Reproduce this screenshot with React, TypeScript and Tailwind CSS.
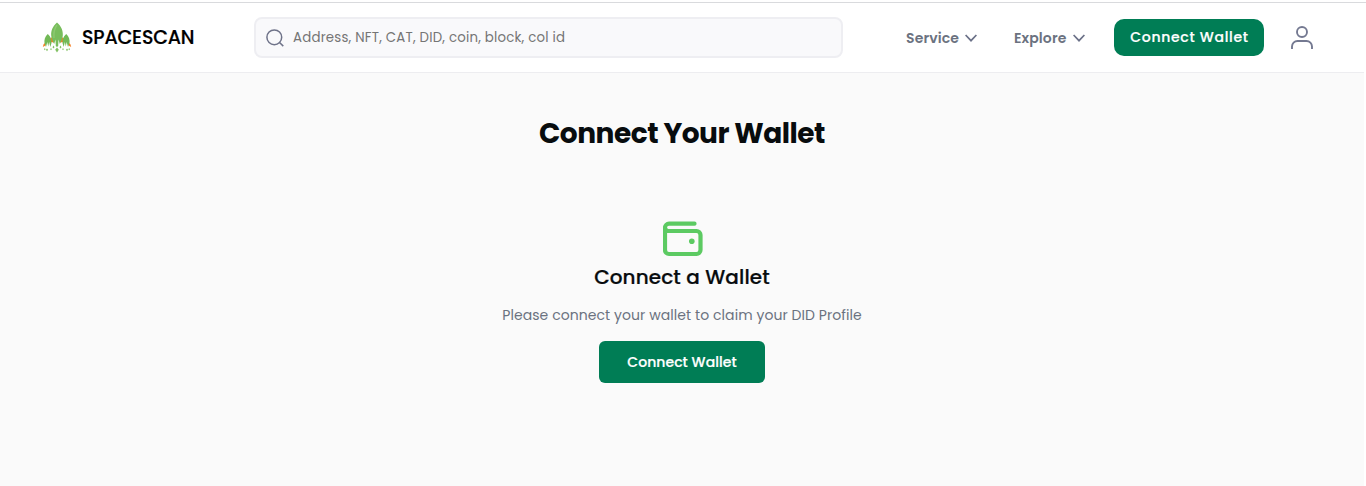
import React from "react";

function Logo() {
  return (
    <svg width="30" height="32" viewBox="0 0 30 32" className="shrink-0">
      <path d="M8.500 17 L12 15.500 L12 21.500 L8.500 21Z M21.500 17 L18 15.500 L18 21.500 L21.500 21Z M.8 26 Q1 22.500 3.500 21.500 L3.500 24.500Z M29.200 26 Q29 22.500 26.500 21.500 L26.500 24.500Z" fill="#f57f25" />
      <path d="M15 1.500 C10.500 5.500 8.800 10 9.200 14.500 C9.500 18 10.800 20 12.200 23 L13.500 18.500 L13.800 25 L15 26 L16.200 25 L16.500 18.500 L17.800 23 C19.200 20 20.500 18 20.800 14.500 C21.200 10 19.500 5.500 15 1.500Z" fill="#78bd5c" />
      <path d="M15 4 C12 8 11.500 12 12 17" fill="none" stroke="#8dc871" strokeWidth="1.400" />
      <path d="M5.800 13 C3 15.500 2 19 2.500 22 L4 26 L5.300 21 L6.200 25.500 L7.200 21 L8.300 26 L9.500 22 C9.900 19 8.600 15.500 5.800 13Z" fill="#72b956" />
      <path d="M24.200 13 C21.400 15.500 20.100 19 20.500 22 L21.700 26 L22.800 21 L23.800 25.500 L24.700 21 L26 26 L27.500 22 C28 19 27 15.500 24.200 13Z" fill="#72b956" />
      <path d="M15 26.500l1.800 2.200-1.800 2.800-1.800-2.800zM11.500 24.500l1 1.800-1 1.200-1-1.200zM18.500 24.500l1 1.800-1 1.200-1-1.200zM2.800 27l.8 1.200-.8 1-.8-1zM5 27.500l1 1.200-1 1.500-1-1.500zM25 27.500l1 1.200-1 1.500-1-1.500zM9 27l.8 1.200-.8 1-.8-1zM21 27l.8 1.200-.8 1-.8-1zM27.200 27l.8 1.200-.8 1-.8-1z" fill="#82c163" />
    </svg>
  );
}

function NavItem({ label }: { label: string }) {
  return (
    <button className="flex h-6 items-center gap-[6px] text-[14px] font-semibold text-[#6b7280]">
      <span className="w-[53px] whitespace-nowrap text-left tracking-[0.12px]">{label}</span>
      <svg width="12" height="8" viewBox="0 0 12 8" fill="none" stroke="#6b7188" strokeWidth="1.7">
        <path d="M.6 1 6 6.700 11.400 1" />
      </svg>
    </button>
  );
}

export default function App() {
  return (
    <div className="h-[486px] w-full overflow-hidden bg-white pt-[2px] font-['Poppins','Inter',sans-serif]">
      <header className="flex h-[70px] w-full items-center border-t border-[#d9dadd]">
        <div className="-mt-px flex w-[254px] items-center gap-[10px] pl-[42px]">
          <Logo />
          <span className="whitespace-nowrap pt-[2px] text-[19px] font-medium leading-[28px] tracking-[-0.15px] text-black [-webkit-text-stroke:0.2px_black]">SPACESCAN</span>
        </div>
        <div className="flex h-[41px] w-[589px] items-center gap-[9px] rounded-lg border-2 border-[#eeeef2] bg-[#f9f9fb] pl-[10px]">
          <svg className="mt-px" width="18" height="18" viewBox="0 0 18 18" fill="none" stroke="#6f7389" strokeWidth="1.5">
            <circle cx="8.300" cy="8.300" r="7.400" />
            <path d="m13.500 13.500 3.800 3.600" />
          </svg>
          <span className="pt-px whitespace-nowrap text-[13.333px] tracking-[0.21px] text-[#757575]">Address, NFT, CAT, DID, coin, block, col id</span>
        </div>
        <nav className="mt-px flex gap-[37px] pl-[63px]">
          <NavItem label="Service" />
          <NavItem label="Explore" />
        </nav>
        <button className="ml-[29px] flex h-[37px] w-[150px] items-center justify-center rounded-[10px] bg-[#007d55] text-[14px] font-medium text-white">
          <span className="whitespace-nowrap pl-px tracking-[0.72px] [-webkit-text-stroke:0.2px_white]">Connect Wallet</span>
        </button>
        <button className="ml-[27px] mt-px" aria-label="Account">
          <svg width="22" height="24" viewBox="0 0 22 24" fill="none" stroke="#747991" strokeWidth="1.900">
            <circle cx="11" cy="6" r="5" />
            <path d="M1 23v-2.500A5.500 5.500 0 0 1 6.500 15h9a5.500 5.500 0 0 1 5.500 5.500V23" />
          </svg>
        </button>
      </header>
      <main className="flex h-[414px] w-[1364px] flex-col items-center border-t border-[#ededf0] bg-[#fafafa] pt-[40px]">
        <h1 className="h-[42px] whitespace-nowrap text-[28px] font-bold leading-[42px] tracking-[-0.5px] text-[#080c0e]">Connect Your Wallet</h1>
        <svg className="ml-[2px] mt-[66px] shrink-0" width="40" height="36" viewBox="0 0 40 36" fill="none" stroke="#5cca62" strokeWidth="4.200" strokeLinecap="round">
          <path d="M31.500 2.700H6a4 4 0 0 0-4 4V29a4 4 0 0 0 4 4h27.500a4 4 0 0 0 4-4V14a4 4 0 0 0-4-4H5.500a3.500 3.500 0 0 1-3.500-3.500" />
          <circle cx="28.800" cy="20.200" r="2.800" fill="#5cca62" stroke="none" />
        </svg>
        <h2 className="mt-[5px] h-[30px] whitespace-nowrap text-[20px] font-medium leading-[30px] tracking-[0.12px] text-[#080c0e] [-webkit-text-stroke:0.2px_#080c0e]">Connect a Wallet</h2>
        <p className="mt-[13px] h-[20px] whitespace-nowrap text-[14px] leading-[20px] tracking-[0.07px] text-[#6b7280]">Please connect your wallet to claim your DID Profile</p>
        <button className="mt-[16px] flex h-[42px] w-[166px] items-center justify-center rounded-md bg-[#007d55] text-[14px] font-medium text-white">
          <span className="whitespace-nowrap tracking-[0.07px] [-webkit-text-stroke:0.2px_white]">Connect Wallet</span>
        </button>
      </main>
    </div>
  );
}
